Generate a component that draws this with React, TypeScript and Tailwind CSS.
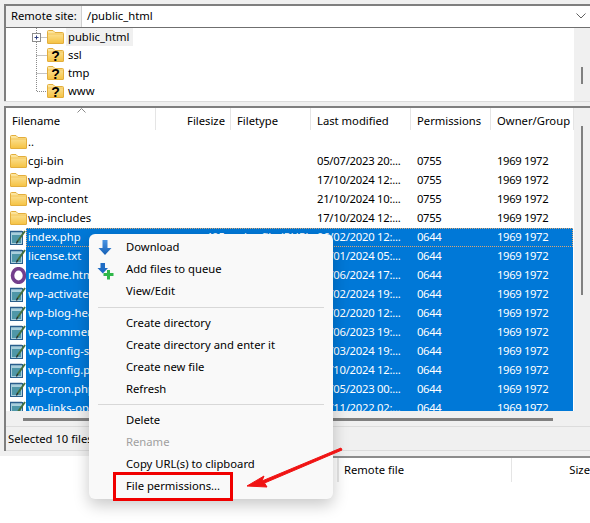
import React from "react";

function Folder() {
  return (
    <svg width="17" height="14" viewBox="0 0 17 14" className="shrink-0">
      <defs>
        <linearGradient id="fg" x1="0" y1="0" x2="0" y2="1">
          <stop offset="0" stopColor="#fde9a8" />
          <stop offset="1" stopColor="#f5c242" />
        </linearGradient>
      </defs>
      <path d="M0.5 13V1.5Q0.5 .5 1.5 .5H6L8 2.5H15.5Q16.5 2.5 16.5 3.5V13Q16.5 13.5 16 13.5H1Q.5 13.5 .5 13Z" fill="url(#fg)" stroke="#e3ae3c" />
      <path d="M1 4H16" stroke="#f3c65a" />
    </svg>
  );
}

function QFolder() {
  return (
    <div className="relative shrink-0 w-[17px] h-[14px]">
      <Folder />
      <svg width="17" height="16" viewBox="0 0 17 16" className="absolute left-0 top-[-1px]">
        <text x="8.5" y="14" textAnchor="middle" fontSize="14" fontWeight="700" fontFamily="'Liberation Sans', sans-serif" fill="#000">?</text>
      </svg>
    </div>
  );
}

function PhpIcon() {
  return (
    <svg width="17" height="17" viewBox="0 0 17 17" className="shrink-0">
      <rect x="0.5" y="2.5" width="12" height="13" fill="#a9cfdc" stroke="#2a5f8c" />
      <rect x="2" y="6" width="9" height="8" fill="#4f97a8" />
      <path d="M1 1.5V3.5M3 1.5V3.5M5 1.5V3.5M7 1.5V3.5M9 1.5V3.5M11 1.5V3.5" stroke="#2a5f8c" />
      <path d="M7.5 12.5L15 2" stroke="#44703f" strokeWidth="2" />
      <path d="M6.5 14.5L7.5 12" stroke="#222" strokeWidth="1.2" />
    </svg>
  );
}

function OperaIcon() {
  return (
    <svg width="17" height="17" viewBox="0 0 17 17" className="shrink-0">
      <ellipse cx="8.5" cy="8.5" rx="6" ry="6.8" fill="none" stroke="#733f8c" strokeWidth="3.6" />
    </svg>
  );
}

function DownIcon() {
  return (
    <svg width="16" height="17" viewBox="0 0 16 17">
      <defs>
        <linearGradient id="dg" x1="0" y1="0" x2="0" y2="1">
          <stop offset="0" stopColor="#4b94e3" />
          <stop offset="1" stopColor="#1560b5" />
        </linearGradient>
      </defs>
      <path d="M5.5 1H10.5V9H14.5L8 16L1.5 9H5.5Z" fill="url(#dg)" />
    </svg>
  );
}

function AddIcon() {
  return (
    <svg width="17" height="18" viewBox="0 0 17 18">
      <path d="M3.5 0H8V5H11L5.8 10.5L0.5 5H3.5Z" fill="#1f6cc4" />
      <path d="M10 7H13V10H16.5V13H13V16.5H10V13H6.5V10H10Z" fill="#2fb84a" />
    </svg>
  );
}

const dirs = [
  ["..", "", ""],
  ["cgi-bin", "05/07/2023 20:...", "0755"],
  ["wp-admin", "17/10/2024 12:...", "0755"],
  ["wp-content", "21/10/2024 10:...", "0755"],
  ["wp-includes", "17/10/2024 12:...", "0755"],
];

const files = [
  ["index.php", "06/02/2020 12:...", "405", "php-file (PHP)"],
  ["license.txt", "09/01/2024 05:...", "", ""],
  ["readme.html", "25/06/2024 17:...", "", ""],
  ["wp-activate.php", "09/02/2024 19:...", "", ""],
  ["wp-blog-header.php", "06/02/2020 12:...", "", ""],
  ["wp-comments-post.php", "09/06/2023 19:...", "", ""],
  ["wp-config-sample.php", "09/03/2024 19:...", "", ""],
  ["wp-config.php", "17/10/2024 12:...", "", ""],
  ["wp-cron.php", "16/05/2023 00:...", "", ""],
  ["wp-links-opml.php", "26/11/2022 02:...", "", ""],
];

const headers: [string, string][] = [
  ["Filename", "w-[150px] pl-[6px]"],
  ["Filesize", "w-[75px] pr-[5px] text-right"],
  ["Filetype", "w-[80px] pl-[6px]"],
  ["Last modified", "w-[100px] pl-[6px]"],
  ["Permissions", "w-[80px] pl-[6px]"],
  ["Owner/Group", "w-[83px] pl-[6px]"],
];

function Cells({ name, size, type, date, perm, owner }: { name: string; size: string; type: string; date: string; perm: string; owner: string }) {
  return (
    <>
      <div className="w-[130px] pl-[2px] whitespace-nowrap overflow-hidden">{name}</div>
      <div className="w-[75px] pr-[6px] text-right whitespace-nowrap overflow-hidden">{size}</div>
      <div className="w-[80px] pl-[6px] whitespace-nowrap overflow-hidden">{type}</div>
      <div className="w-[100px] pl-[6px] whitespace-nowrap overflow-hidden tracking-[-0.25px]">{date}</div>
      <div className="w-[80px] pl-[6px] tracking-[-0.35px]">{perm}</div>
      <div className="flex-1 pl-[6px] whitespace-nowrap tracking-[-0.35px]">{owner}</div>
    </>
  );
}

function TreeLink({ plus, last }: { plus?: boolean; last?: boolean }) {
  return (
    <div className="relative w-[41px] h-[18px] shrink-0">
      <svg width="41" height="18" viewBox="0 0 41 18" className="absolute left-0 top-0">
        <path d={last ? "M30.5 0V9.5H41" : "M30.5 0V18M30.5 9.5H41"} stroke="#8a8a8a" strokeDasharray="1 1" fill="none" />
        {plus && (
          <>
            <rect x="26.5" y="5.5" width="8" height="8" fill="#fff" stroke="#8c8c8c" />
            <path d="M28.5 9.5H32.5M30.5 7.5V11.5" stroke="#2f3f7f" />
          </>
        )}
      </svg>
    </div>
  );
}

const menu: (string | null)[] = [
  "Download",
  "Add files to queue",
  "View/Edit",
  null,
  "Create directory",
  "Create directory and enter it",
  "Create new file",
  "Refresh",
  null,
  "Delete",
  "Rename",
  "Copy URL(s) to clipboard",
  "File permissions...",
];

export default function App() {
  return (
    <div className="relative w-[590px] h-[523px] overflow-hidden bg-white text-[11.25px] leading-[16px] text-black font-['Noto_Sans','Open_Sans',sans-serif]">
      <div className="bg-[#f0f0f0] pl-1 pt-1 h-[456px] flex flex-col">
        {/* Remote site + tree */}
        <div className="border-l-2 border-t-2 border-[#7f7f7f] h-[97px] flex flex-col bg-white">
          <div className="h-[22px] flex items-stretch border-b border-[#6f6f6f] shrink-0">
            <div className="w-[76px] bg-[#f0f0f0] border-r border-[#d0d0d0] flex items-center pl-[5px] pb-[1px] whitespace-nowrap">Remote site:</div>
            <div className="flex-1 flex items-center pl-[5px] pb-[1px] justify-between pr-[3px]">
              <span>/public_html</span>
              <svg width="10" height="6" viewBox="0 0 10 6" className="mr-[1px]">
                <path d="M.5 .5L5 5L9.5 .5" fill="none" stroke="#606060" />
              </svg>
            </div>
          </div>
          <div className="flex flex-1 min-h-0">
            <div className="flex-1 overflow-hidden">
              {[
                ["public_html", true],
                ["ssl", false],
                ["tmp", false],
                ["www", false],
              ].map(([n, isPlus], i) => (
                <div key={String(n)} className="h-[18px] flex items-center">
                  <TreeLink plus={Boolean(isPlus)} last={i === 3} />
                  {isPlus ? <Folder /> : <QFolder />}
                  <span className={i === 0 ? "ml-[2px] px-[2px] bg-[#f0f0f0] h-[18px] leading-[18px] w-[67px]" : "ml-[4px]"}>{String(n)}</span>
                </div>
              ))}
            </div>
            <div className="w-[16px] bg-[#f0f0f0] shrink-0 pl-[7px] pt-[39px]">
              <div className="w-[2px] h-[17px] bg-[#808080]" />
            </div>
          </div>
        </div>
        <div className="h-[5px] border-t border-[#dcdcdc] shrink-0" />
        {/* File list */}
        <div className="border-l-2 border-t-2 border-[#7f7f7f] flex-1 flex flex-col min-h-0">
          <div className="flex h-[303px] shrink-0">
            <div className="w-[568px] bg-white flex flex-col">
              <div className="h-[22px] flex items-center shrink-0 relative">
                {headers.map(([h, c]) => (
                  <div key={h} className={`${c} h-[22px] leading-[25px] border-r border-[#e5e5e5] whitespace-nowrap`}>{h}</div>
                ))}
                <svg width="9" height="5" viewBox="0 0 9 5" className="absolute left-[71px] top-0">
                  <path d="M.5 4.5L4.5 .5L8.5 4.5" fill="none" stroke="#8a8a8a" />
                </svg>
              </div>
              <div className="flex-1 overflow-hidden pt-[3px]">
                {dirs.map(([n, d, p]) => (
                  <div key={n} className="h-[19px] flex items-center pb-[1px]">
                    <div className="w-[20px] pl-[4px] shrink-0"><Folder /></div>
                    <Cells name={n} size="" type="" date={d} perm={p} owner={d ? "1969 1972" : ""} />
                  </div>
                ))}
                {files.map(([n, d, s, t], i) => (
                  <div key={n} className="h-[19px] flex items-center">
                    <div className="w-[20px] pl-[4px] shrink-0">{i === 2 ? <OperaIcon /> : <PhpIcon />}</div>
                    <div className={`flex-1 mr-[1px] h-[19px] pb-[1px] flex items-center bg-[#0078d7] text-white ${i === 0 ? "outline-1 outline-dotted outline-[#d8a878] -outline-offset-1" : ""}`}>
                      <Cells name={n} size={s} type={t} date={d} perm="0644" owner="1969 1972" />
                    </div>
                  </div>
                ))}
              </div>
            </div>
            <div className="w-[16px] bg-[#f0f0f0] pl-[7px] pt-[18px] shrink-0">
              <div className="w-[2px] h-[169px] bg-[#808080]" />
            </div>
          </div>
          <div className="h-[16px] bg-[#f0f0f0] border-b border-[#dcdcdc] pt-[7px] pl-[17px] shrink-0">
            <div className="w-[530px] h-[3px] bg-[#808080]" />
          </div>
          <div className="flex-1 flex items-center pl-[2px] border-b border-[#dcdcdc]">Selected 10 files.</div>
        </div>
        <div className="h-[5px] shrink-0" />
      </div>

      {/* Queue header */}
      <div className="pl-[333px]">
        <div className="border-t-2 border-[#8c8c8c] h-[26px] flex">
          <div className="w-[181px] ml-[4px] border-l-2 border-r border-[#e5e5e5] pl-[5px] h-[24px] leading-[24px]">Remote file</div>
          <div className="pl-[57px] h-[24px] leading-[24px] whitespace-nowrap">Size</div>
        </div>
      </div>

      {/* Context menu */}
      <div className="absolute left-[89px] top-[234px] w-[244px] h-[265px] bg-[#f9f9f9] rounded-[6px] pt-[2px] shadow-[0_6px_16px_rgba(0,0,0,0.22)]">
        {menu.map((m, i) =>
          m === null ? (
            <div key={i} className={`${i === 3 ? "h-[10px]" : "h-[9px]"} flex items-center pl-[9px] pr-[9px]`}>
              <div className="w-full h-px bg-[#d8d8d8]" />
            </div>
          ) : (
            <div key={m} className={`relative h-[22px] flex items-center pl-[37px] ${m === "Rename" ? "text-[#a0a0a0]" : ""}`}>
              {m === "Download" && <div className="absolute left-[8px] top-[3px]"><DownIcon /></div>}
              {m === "Add files to queue" && <div className="absolute left-[8px] top-[5px]"><AddIcon /></div>}
              {m}
            </div>
          )
        )}
      </div>

      {/* Annotation */}
      <div className="absolute left-[113px] top-[472px] w-[120px] h-[29px] border-[3px] border-[#f00000]" />
      <svg className="absolute left-0 top-0 pointer-events-none" width="590" height="523" viewBox="0 0 590 523">
        <path d="M341 448L262 481L264 476L247 486L267 487L264.5 483L342 450Z" fill="#f01414" stroke="#f01414" strokeLinejoin="round" />
      </svg>
    </div>
  );
}
